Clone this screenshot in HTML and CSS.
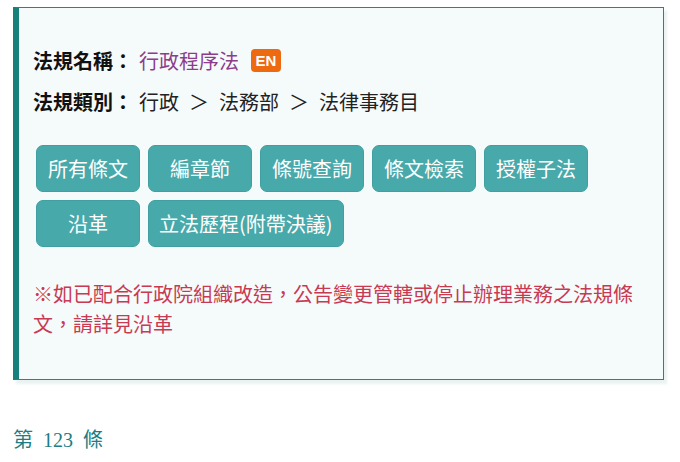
FILE: index.html
```html
<!DOCTYPE html>
<html lang="zh-Hant">
<head>
<meta charset="utf-8">
<title>行政程序法</title>
<link rel="stylesheet" href="styles.css">
</head>
<body>
<div class="law-box">
  <div class="law-row">
    <span class="law-label">法規名稱：</span><a class="law-name" href="#">行政程序法</a><span class="badge-en">EN</span>
  </div>
  <div class="law-row">
    <span class="law-label">法規類別：</span><span>行政</span><span class="sep">＞</span><span>法務部</span><span class="sep">＞</span><span>法律事務目</span>
  </div>
  <div class="btn-group">
    <a class="btn" href="#">所有條文</a>
    <a class="btn" href="#">編章節</a>
    <a class="btn" href="#">條號查詢</a>
    <a class="btn" href="#">條文檢索</a>
    <a class="btn" href="#">授權子法</a>
    <a class="btn" href="#">沿革</a>
    <a class="btn" href="#">立法歷程(附帶決議)</a>
  </div>
  <p class="notice">※如已配合行政院組織改造，公告變更管轄或停止辦理業務之法規條文，請詳見沿革</p>
</div>
<h3 class="article-no">第<span class="num">123</span>條</h3>
</body>
</html>
```
FILE: styles.css
```css
html, body {
  margin: 0;
  padding: 0;
  background: #ffffff;
}

body {
  padding: 7px 0 0 13px;
  font-family: "Noto Sans CJK TC", "Noto Sans", sans-serif;
  font-size: 20px;
  color: #222222;
}

.law-box {
  width: 610px;
  background: #f5fbfb;
  border: 1px solid #25867f;
  border-left: 6px solid #17807a;
  padding: 32px 20px 40px 14px;
  box-shadow: 3px 4px 2px rgba(150, 190, 190, 0.2);
}

.law-row {
  height: 41px;
  line-height: 41px;
  display: flex;
  align-items: center;
  white-space: nowrap;
}

.law-label {
  font-weight: bold;
  color: #111111;
  margin-right: 6px;
}

.law-name {
  color: #8c3d8c;
  text-decoration: none;
}

.badge-en {
  display: inline-flex;
  align-items: center;
  justify-content: center;
  width: 30px;
  height: 23px;
  margin-left: 12px;
  border-radius: 4px;
  background: #ee6a10;
  color: #ffffff;
  font-family: "Liberation Sans", sans-serif;
  font-weight: bold;
  font-size: 15px;
  line-height: 23px;
}

.sep {
  margin: 0 10px;
}

.btn-group {
  display: flex;
  flex-wrap: wrap;
  gap: 8px 8px;
  margin: 23px 0 0 3px;
}

.btn {
  display: flex;
  align-items: center;
  justify-content: center;
  min-width: 104px;
  height: 47px;
  padding: 0 10px;
  box-sizing: border-box;
  background: #48a9ab;
  border: 1px solid #3f9fa1;
  border-radius: 7px;
  color: #ffffff;
  text-decoration: none;
  font-size: 20px;
  line-height: 1;
}

.notice {
  margin: 32px 0 0 0;
  line-height: 30px;
  color: #c83a52;
}

.article-no {
  margin: 44px 0 0 0;
  font-weight: normal;
  font-size: 20px;
  line-height: 30px;
  color: #1c7d84;
}

.article-no .num {
  font-family: "Liberation Serif", serif;
  margin: 0 10px;
}
```
